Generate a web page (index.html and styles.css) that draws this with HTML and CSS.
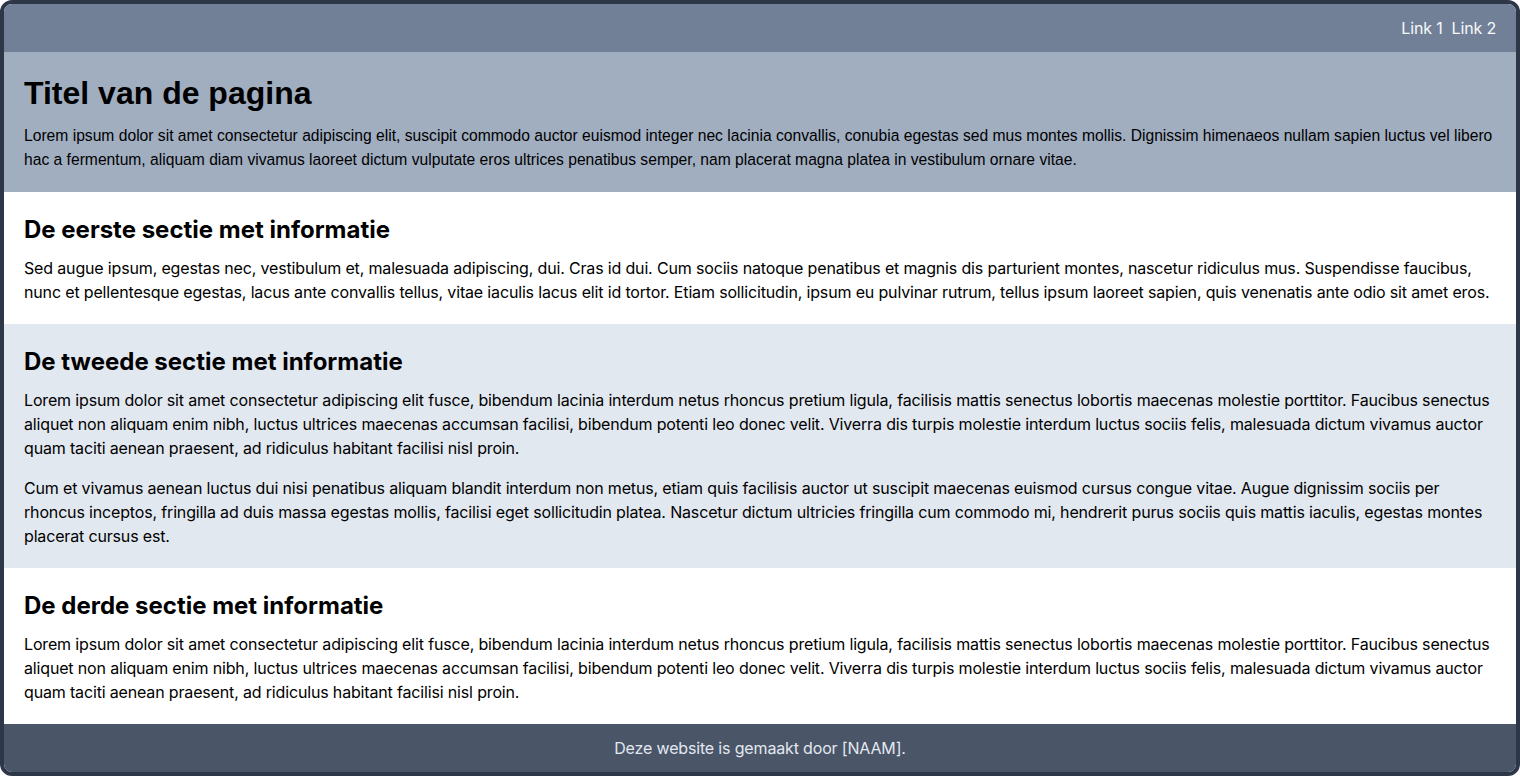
FILE: index.html
```html
<!DOCTYPE html>
<html lang="nl">
<head>
<meta charset="utf-8">
<title>Titel van de pagina</title>
<link rel="stylesheet" href="styles.css">
</head>
<body>
<div class="frame">
  <nav class="topbar">
    <a class="nav-link" href="#">Link 1</a>
    <a class="nav-link" href="#">Link 2</a>
  </nav>
  <header class="hero">
    <h1 class="hero-title">Titel van de pagina</h1>
    <p class="hero-text">Lorem ipsum dolor sit amet consectetur adipiscing elit, suscipit commodo auctor euismod integer nec lacinia convallis, conubia egestas sed mus montes mollis. Dignissim himenaeos nullam sapien luctus vel libero hac a fermentum, aliquam diam vivamus laoreet dictum vulputate eros ultrices penatibus semper, nam placerat magna platea in vestibulum ornare vitae.</p>
  </header>
  <main class="content">
    <section class="section">
      <h2 class="section-title">De eerste sectie met informatie</h2>
      <p class="section-text">Sed augue ipsum, egestas nec, vestibulum et, malesuada adipiscing, dui. Cras id dui. Cum sociis natoque penatibus et magnis dis parturient montes, nascetur ridiculus mus. Suspendisse faucibus, nunc et pellentesque egestas, lacus ante convallis tellus, vitae iaculis lacus elit id tortor. Etiam sollicitudin, ipsum eu pulvinar rutrum, tellus ipsum laoreet sapien, quis venenatis ante odio sit amet eros.</p>
    </section>
    <section class="section section-alt">
      <h2 class="section-title">De tweede sectie met informatie</h2>
      <p class="section-text">Lorem ipsum dolor sit amet consectetur adipiscing elit fusce, bibendum lacinia interdum netus rhoncus pretium ligula, facilisis mattis senectus lobortis maecenas molestie porttitor. Faucibus senectus aliquet non aliquam enim nibh, luctus ultrices maecenas accumsan facilisi, bibendum potenti leo donec velit. Viverra dis turpis molestie interdum luctus sociis felis, malesuada dictum vivamus auctor quam taciti aenean praesent, ad ridiculus habitant facilisi nisl proin.</p>
      <p class="section-text">Cum et vivamus aenean luctus dui nisi penatibus aliquam blandit interdum non metus, etiam quis facilisis auctor ut suscipit maecenas euismod cursus congue vitae. Augue dignissim sociis per rhoncus inceptos, fringilla ad duis massa egestas mollis, facilisi eget sollicitudin platea. Nascetur dictum ultricies fringilla cum commodo mi, hendrerit purus sociis quis mattis iaculis, egestas montes placerat cursus est.</p>
    </section>
    <section class="section">
      <h2 class="section-title">De derde sectie met informatie</h2>
      <p class="section-text">Lorem ipsum dolor sit amet consectetur adipiscing elit fusce, bibendum lacinia interdum netus rhoncus pretium ligula, facilisis mattis senectus lobortis maecenas molestie porttitor. Faucibus senectus aliquet non aliquam enim nibh, luctus ultrices maecenas accumsan facilisi, bibendum potenti leo donec velit. Viverra dis turpis molestie interdum luctus sociis felis, malesuada dictum vivamus auctor quam taciti aenean praesent, ad ridiculus habitant facilisi nisl proin.</p>
    </section>
  </main>
  <footer class="footer">Deze website is gemaakt door [NAAM].</footer>
</div>
</body>
</html>
```

FILE: styles.css
```css
* {
  box-sizing: border-box;
}

html, body {
  margin: 0;
  padding: 0;
  background: #ffffff;
}

body {
  font-family: Inter, "Noto Sans", sans-serif;
  font-size: 16px;
  line-height: 24px;
  color: #000000;
}

.frame {
  height: 776px;
  border: 4px solid #2d3748;
  border-radius: 12px;
  overflow: hidden;
  display: flex;
  flex-direction: column;
}

.topbar {
  height: 48px;
  flex: none;
  background: #718096;
  display: flex;
  justify-content: flex-end;
  align-items: center;
  gap: 9px;
  padding: 0 20px;
}

.nav-link {
  color: #f7fafc;
  text-decoration: none;
  font-size: 16px;
  letter-spacing: -0.16px;
}

.hero {
  flex: none;
  background: #a0aec0;
  padding: 20px;
  font-family: "Liberation Sans", Arial, sans-serif;
}

.hero-title {
  margin: 0 0 10px;
  font-size: 32px;
  line-height: 42px;
  font-weight: 700;
}

.hero-text {
  margin: 0;
  font-size: 15.65px;
  line-height: 24px;
}

.content {
  flex: 1;
  min-height: 0;
}

.section {
  padding: 20px;
  background: #ffffff;
}

.section-alt {
  background: #e2e8f0;
}

.section-title {
  margin: 0 0 8px;
  font-size: 24px;
  line-height: 36px;
  font-weight: 700;
}

.section-text {
  margin: 0;
  letter-spacing: -0.16px;
}

.section-text + .section-text {
  margin-top: 16px;
}

.footer {
  height: 48px;
  flex: none;
  background: #4a5568;
  color: #e2e8f0;
  display: flex;
  align-items: center;
  justify-content: center;
  letter-spacing: -0.16px;
}
```
